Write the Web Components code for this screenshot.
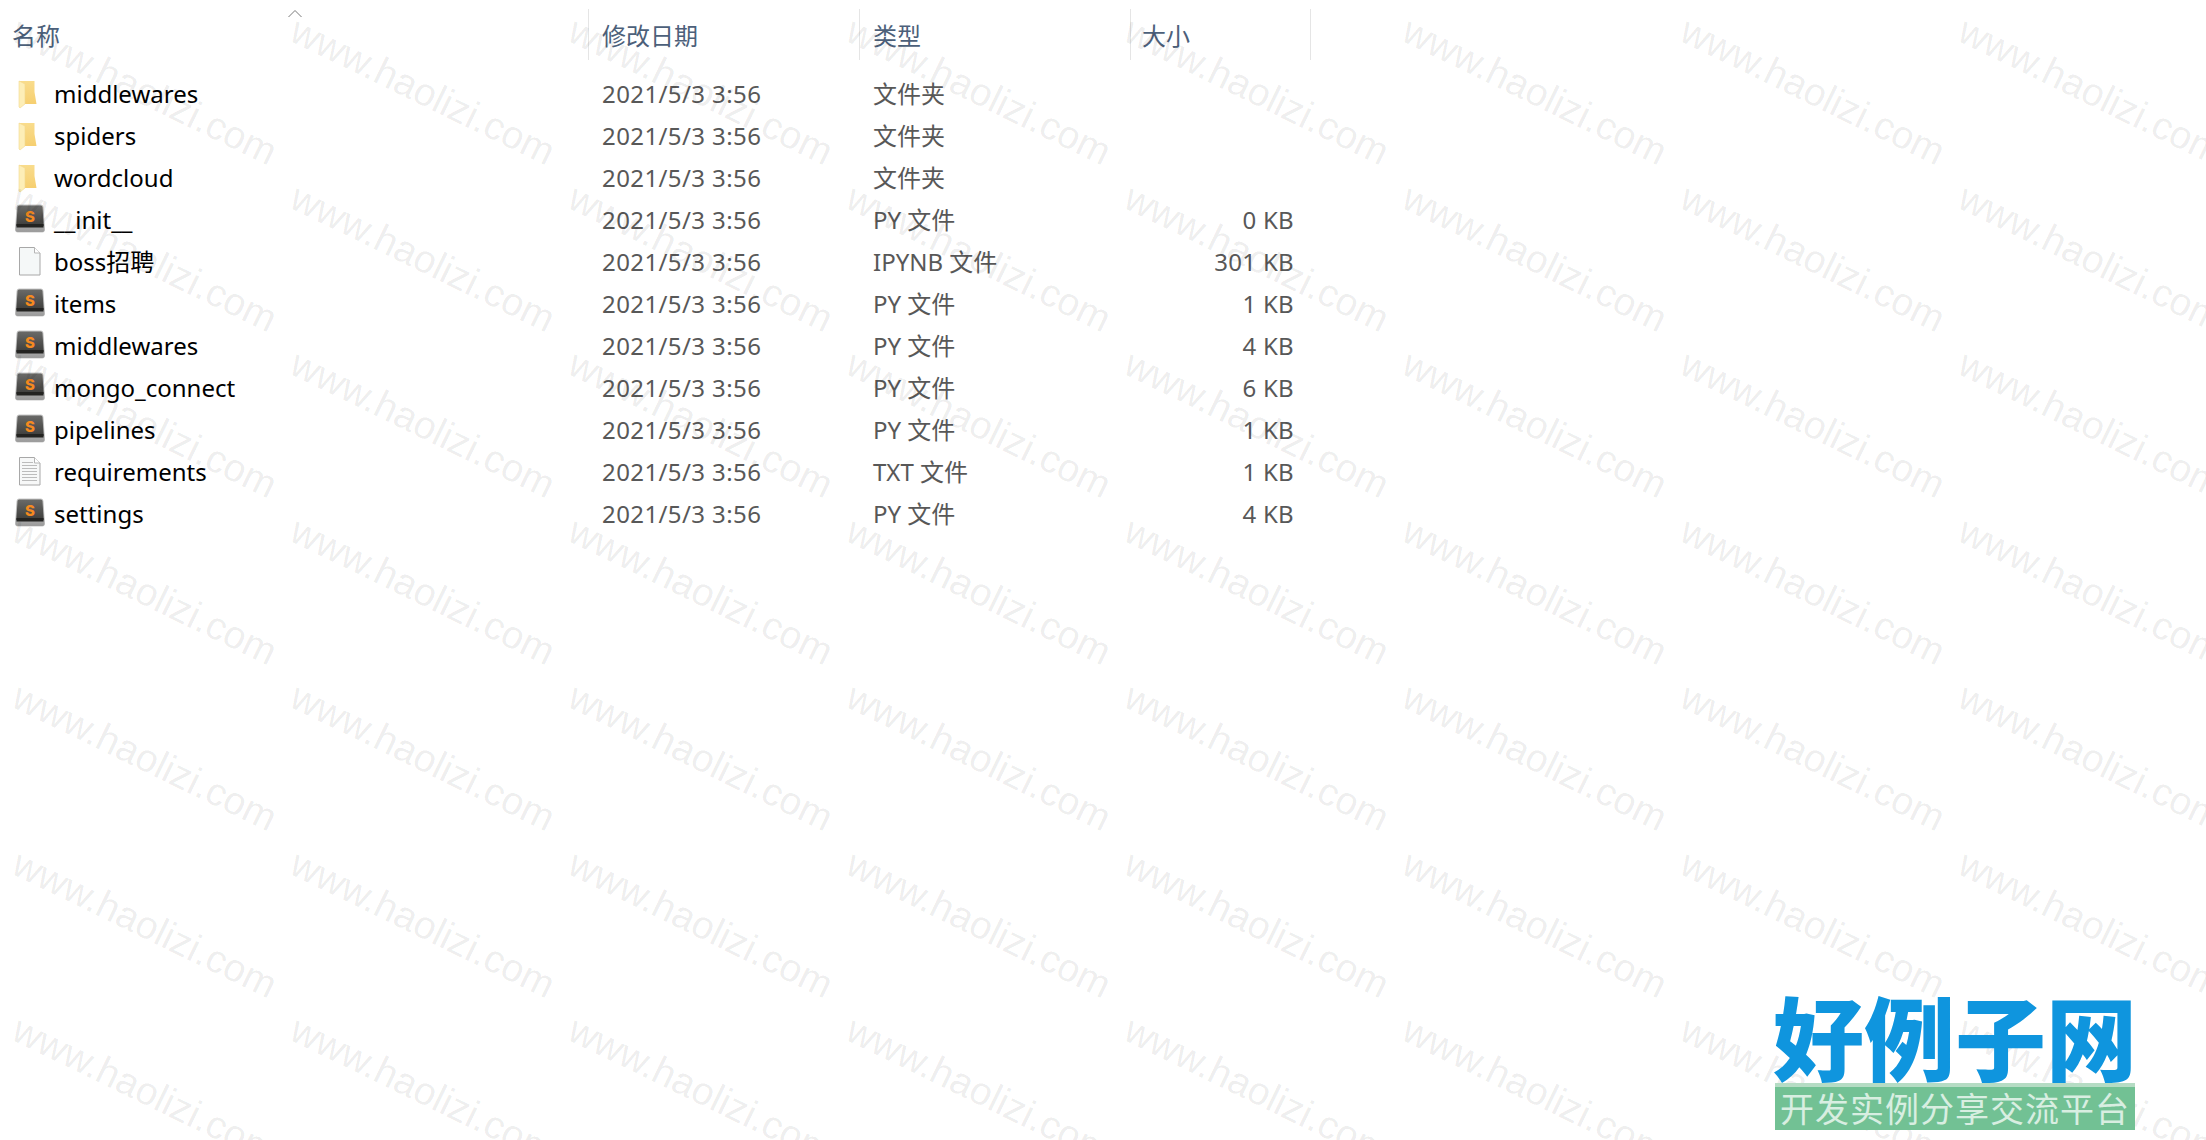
<!DOCTYPE html>
<html lang="zh">
<head>
<meta charset="utf-8">
<title>haolizi</title>
<style>
  html, body { margin: 0; padding: 0; background: #fff; }
  body { width: 2206px; height: 1140px; overflow: hidden; position: relative; font-family: "Noto Sans", "Noto Sans CJK SC", sans-serif; }
</style>
</head>
<body>
<explorer-view>
  <file-header></file-header>
  <file-row icon="folder" date="2021/5/3 3:56" type="文件夹">middlewares</file-row>
  <file-row icon="folder" date="2021/5/3 3:56" type="文件夹">spiders</file-row>
  <file-row icon="folder" date="2021/5/3 3:56" type="文件夹">wordcloud</file-row>
  <file-row icon="sublime" date="2021/5/3 3:56" type="PY 文件" size="0 KB">__init__</file-row>
  <file-row icon="blank" date="2021/5/3 3:56" type="IPYNB 文件" size="301 KB">boss招聘</file-row>
  <file-row icon="sublime" date="2021/5/3 3:56" type="PY 文件" size="1 KB">items</file-row>
  <file-row icon="sublime" date="2021/5/3 3:56" type="PY 文件" size="4 KB">middlewares</file-row>
  <file-row icon="sublime" date="2021/5/3 3:56" type="PY 文件" size="6 KB">mongo_connect</file-row>
  <file-row icon="sublime" date="2021/5/3 3:56" type="PY 文件" size="1 KB">pipelines</file-row>
  <file-row icon="lines" date="2021/5/3 3:56" type="TXT 文件" size="1 KB">requirements</file-row>
  <file-row icon="sublime" date="2021/5/3 3:56" type="PY 文件" size="4 KB">settings</file-row>
</explorer-view>
<water-mark></water-mark>
<brand-logo></brand-logo>

<script>
const COLUMNS = '589px 271px 271px 180px'
const FONT = '"Noto Sans", "Noto Sans CJK SC", sans-serif'

const ICONS = {
  folder: `
    <svg width="46" height="42" viewBox="0 0 46 42">
      <defs>
        <linearGradient id="back" x1="0" y1="0" x2="0" y2="1">
          <stop offset="0" stop-color="#f9dc8c"/><stop offset="1" stop-color="#f6cf70"/>
        </linearGradient>
      </defs>
      <path d="M19 8h15.500v11l2 12H25z" fill="url(#back)"/>
      <path d="M19 8l6 3v20l-5 4-1-1z" fill="#fdeeb7" stroke="#f4d98f" stroke-width=".6"/>
    </svg>`,
  sublime: `
    <svg width="46" height="42" viewBox="0 0 46 42">
      <defs>
        <linearGradient id="top" x1="0" y1="0" x2="0" y2="1">
          <stop offset="0" stop-color="#6a6a68"/><stop offset="1" stop-color="#3d3d3b"/>
        </linearGradient>
        <linearGradient id="base" x1="0" y1="0" x2="0" y2="1">
          <stop offset="0" stop-color="#d8d8d8"/><stop offset="1" stop-color="#9a9a9a"/>
        </linearGradient>
      </defs>
      <path d="M15.500 31l1.500-23q.2-2 2-2h22q1.800 0 2 2l1.500 23q0 2-2 2h-25q-2 0-2-2z" fill="url(#base)" stroke="#a5a5a5" stroke-width=".6"/>
      <path d="M17.500 8q.2-1.500 1.600-1.500h21.800q1.400 0 1.600 1.500l1.200 19h-27.400z" fill="url(#top)"/>
      <rect x="16.500" y="25" width="27" height="3.500" fill="#232321"/>
      <text x="30" y="23" text-anchor="middle" font-family="Inter, sans-serif" font-weight="800" font-size="15" fill="#f58a1f">S</text>
    </svg>`,
  blank: `
    <svg width="46" height="42" viewBox="0 0 46 42">
      <path d="M19.500 6.500h15l5.500 5.500v22h-20.500z" fill="#f5f8f8" stroke="#a8a8a8"/>
      <path d="M34.500 6.500v5.500h5.500" fill="#fff" stroke="#b5b5b5"/>
    </svg>`,
  lines: `
    <svg width="46" height="42" viewBox="0 0 46 42">
      <path d="M19.500 6.500h15l5.500 5.500v22h-20.500z" fill="#f7f8f8" stroke="#a8a8a8"/>
      <path d="M34.500 6.500v5.500h5.500" fill="#fff" stroke="#b5b5b5"/>
      <path d="M22 11.500h11M22 14.500h15M22 17.500h15M22 20.500h15M22 23.500h15M22 26.500h15M22 29.500h15" stroke="#bcbcbc" stroke-width="1"/>
    </svg>`
}

class ExplorerView extends HTMLElement {
  constructor() {
    super()
    this.shadow = this.attachShadow({ mode: 'open' })
  }

  connectedCallback() {
    this.shadow.innerHTML = /*html*/`
    <style>
      :host {
        display: flex;
        flex-direction: column;
        width: 1311px;
        font-family: ${FONT};
        font-size: 24px;
      }
    </style>
    <slot></slot>
    `
  }
}

class FileHeader extends HTMLElement {
  constructor() {
    super()
    this.shadow = this.attachShadow({ mode: 'open' })
  }

  connectedCallback() {
    this.shadow.innerHTML = /*html*/`
    <style>
      :host {
        display: grid;
        grid-template-columns: ${COLUMNS};
        height: 73px;
        padding-top: 9px;
        box-sizing: border-box;
      }

      .col {
        height: 51px;
        display: flex;
        align-items: center;
        color: #4c607a;
        border-right: 1px solid #e5e5e5;
        box-sizing: border-box;
        padding-left: 13px;
      }

      .name {
        padding-left: 12px;
        position: relative;
      }

      .size-col { padding-left: 11px; }

      .sort {
        position: absolute;
        left: 287px;
        top: 0;
      }
    </style>
    <div class="col name">
      <span>名称</span>
      <svg class="sort" width="16" height="9" viewBox="0 0 16 9"><path d="M1.500 8L8 1.500 14.500 8" fill="none" stroke="#7a7a7a" stroke-width="1"/></svg>
    </div>
    <div class="col">修改日期</div>
    <div class="col">类型</div>
    <div class="col size-col">大小</div>
    `
  }
}

class FileRow extends HTMLElement {
  constructor() {
    super()
    this.shadow = this.attachShadow({ mode: 'open' })
  }

  connectedCallback() {
    const icon = this.getAttribute('icon')
    const date = this.getAttribute('date') || ''
    const type = this.getAttribute('type') || ''
    const size = this.getAttribute('size') || ''

    this.shadow.innerHTML = /*html*/`
    <style>
      :host {
        display: grid;
        grid-template-columns: ${COLUMNS};
        height: 42px;
        align-items: center;
        line-height: 42px;
        color: #585858;
      }

      .name {
        display: flex;
        align-items: center;
        gap: 8px;
        color: #000;
      }

      svg { display: block; flex: none; }

      .date, .type { padding-left: 13px; }

      .date { letter-spacing: 0.4px; }

      .size {
        text-align: right;
        padding-right: 17px;
        letter-spacing: 0.3px;
      }
    </style>
    <div class="name">${ICONS[icon]}<slot></slot></div>
    <div class="date">${date}</div>
    <div class="type">${type}</div>
    <div class="size">${size}</div>
    `
  }
}

class WaterMark extends HTMLElement {
  constructor() {
    super()
    this.shadow = this.attachShadow({ mode: 'open' })
  }

  connectedCallback() {
    let cells = ''
    for (let i = 0; i < 56; i++) {
      cells += '<span>www.haolizi.com</span>'
    }

    this.shadow.innerHTML = /*html*/`
    <style>
      :host {
        position: absolute;
        inset: 0;
        padding: 17px 0 0 15px;
        box-sizing: border-box;
        overflow: hidden;
        display: grid;
        grid-template-columns: repeat(8, 278px);
        grid-auto-rows: 166.500px;
        pointer-events: none;
        font-family: "Liberation Sans", sans-serif;
        font-size: 39px;
        color: rgba(0, 0, 0, 0.08);
      }

      span {
        white-space: nowrap;
        transform-origin: 0 0;
        transform: translate(9px, -7px) rotate(26deg);
        line-height: 1;
      }
    </style>
    ${cells}
    `
  }
}

class BrandLogo extends HTMLElement {
  constructor() {
    super()
    this.shadow = this.attachShadow({ mode: 'open' })
  }

  connectedCallback() {
    this.shadow.innerHTML = /*html*/`
    <style>
      :host {
        position: absolute;
        left: 1775px;
        top: 989px;
        width: 360px;
        display: flex;
        flex-direction: column;
        gap: 4px;
        font-family: "Noto Sans CJK SC", sans-serif;
      }

      .big {
        height: 90px;
        font-size: 91px;
        line-height: 90px;
        font-weight: 900;
        color: #0f95de;
        white-space: nowrap;
        margin-left: -2px;
      }

      .bar {
        height: 47px;
        background: #72c194;
        border-top: 4px solid #b5dcc4;
        box-sizing: border-box;
        color: #d8eee1;
        font-size: 34px;
        line-height: 42px;
        text-align: center;
        letter-spacing: 1px;
        white-space: nowrap;
      }
    </style>
    <div class="big">好例子网</div>
    <div class="bar">开发实例分享交流平台</div>
    `
  }
}

customElements.define('explorer-view', ExplorerView)
customElements.define('file-header', FileHeader)
customElements.define('file-row', FileRow)
customElements.define('water-mark', WaterMark)
customElements.define('brand-logo', BrandLogo)
</script>
</body>
</html>
